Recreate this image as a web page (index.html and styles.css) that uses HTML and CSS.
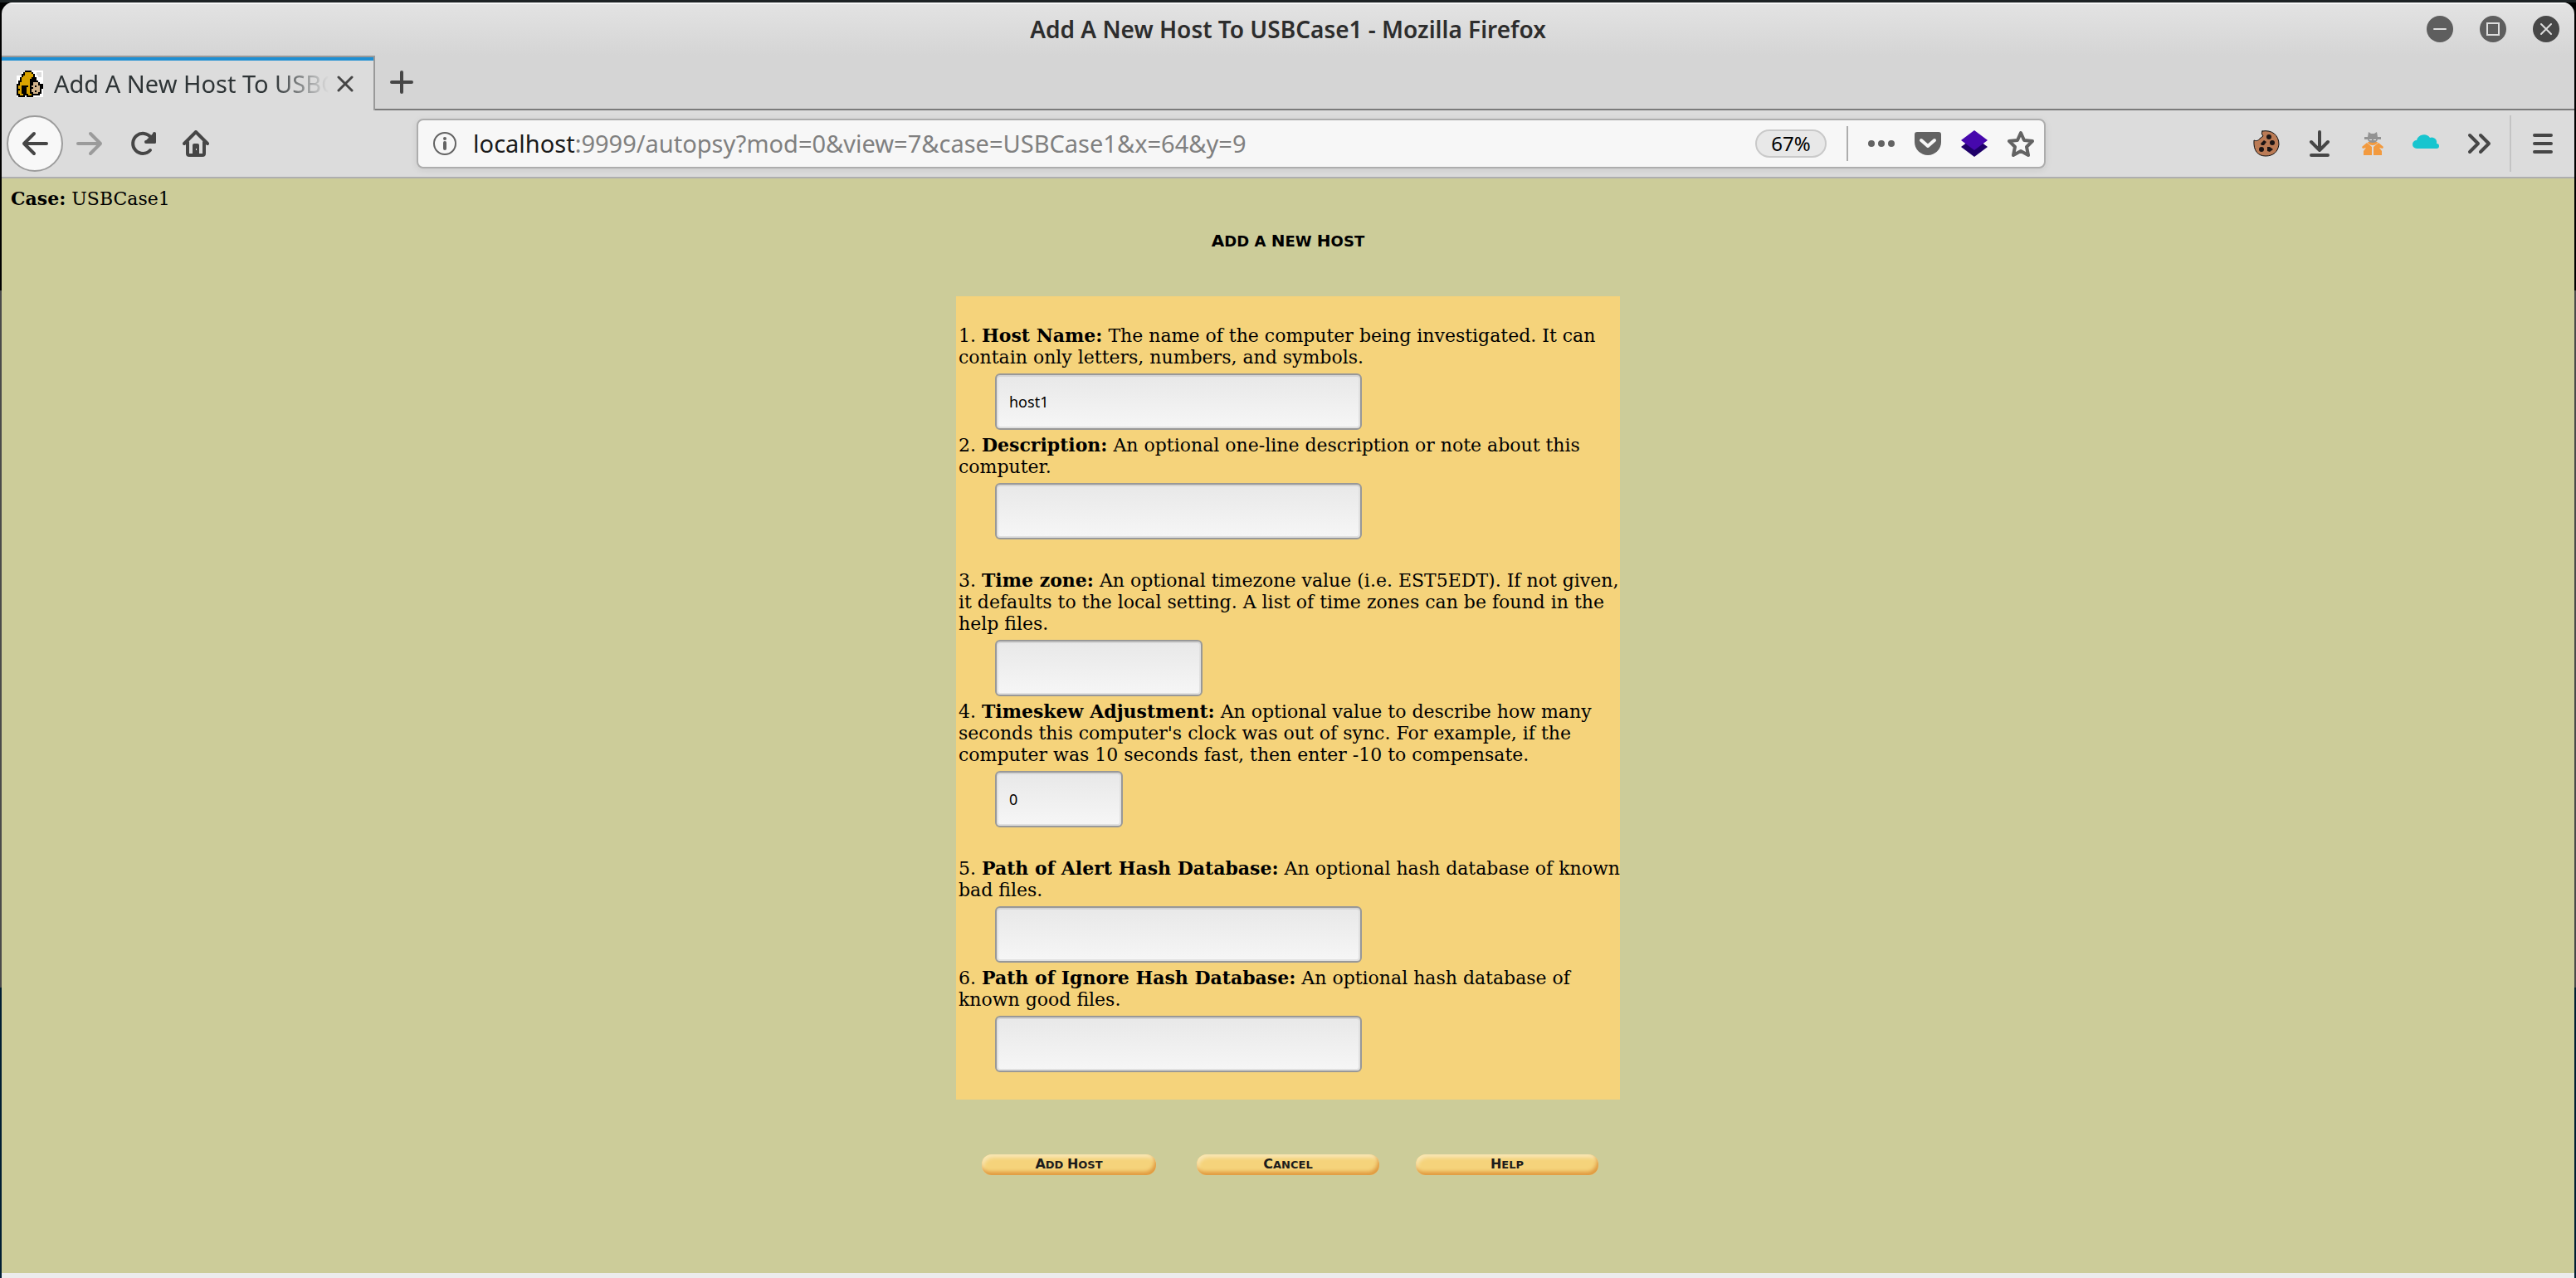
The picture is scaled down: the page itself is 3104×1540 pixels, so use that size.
FILE: index.html
```html
<!DOCTYPE html>
<html lang="en">
<head>
<meta charset="utf-8">
<title>Add A New Host To USBCase1</title>
<link rel="stylesheet" href="styles.css">
</head>
<body>
<div class="window">
  <header class="chrome">
    <div class="titlebar">
      <h1 class="window-title">Add A New Host To USBCase1 - Mozilla Firefox</h1>
      <div class="controls">
        <button class="control" aria-label="Minimize"><svg viewBox="0 0 32 32"><path d="M9 16H23"/></svg></button>
        <button class="control" aria-label="Maximize"><svg viewBox="0 0 32 32"><path d="M9 9H23V23H9Z"/></svg></button>
        <button class="control control-close" aria-label="Close"><svg viewBox="0 0 32 32"><path d="M10 10L22 22M22 10L10 22"/></svg></button>
      </div>
    </div>
    <div class="tabs">
      <div class="tab">
        <svg class="favicon" viewBox="0 0 16 16" shape-rendering="crispEdges">
          <path fill="#fff" d="M5 0H16V16H0V3H3V1H5Z"/>
          <path fill="#dcdcdc" d="M12 1H15V4H13V3H12Z"/>
          <path fill="#000" d="M5 0H9V1H10V2H11V4H12V6H13V7H14V8H16V11H15V14H14V15H10V16H6V15H5V16H1V15H0V8H1V6H2V4H3V2H4V1H5Z"/>
          <path fill="#d9a300" d="M5 1H9V2H10V4H9V5H8V14H9V15H7V14H6V10H7V6H6V4H5V9H4V15H2V14H1V9H2V7H3V4H4V3H5Z"/>
          <path fill="#000" d="M3 9H4V14H3ZM1 11H2V12H1Z"/>
          <path fill="#d9a300" d="M5 3H8V9H5Z"/>
          <path fill="#d2b48c" d="M10 7H13V9H14V13H13V14H10V13H9V9H10Z"/>
          <path fill="#000" d="M9 10H10V11H9ZM11 9H12V10H11ZM11 12H12V13H11Z"/>
        </svg>
        <span class="tab-label">Add A New Host To USBCase1</span>
        <button class="tab-close" aria-label="Close tab"><svg viewBox="0 0 20 20"><path d="M2 2L18 18M18 2L2 18"/></svg></button>
      </div>
      <div class="tab-rest">
        <button class="icon" aria-label="New tab"><svg viewBox="0 0 32 32"><path d="M16 4V28M4 16H28"/></svg></button>
      </div>
    </div>
    <nav class="toolbar">
      <div class="nav-buttons">
        <button class="back" aria-label="Back"><svg viewBox="0 0 32 32"><path d="M30 16H3M15 4L3 16L15 28"/></svg></button>
        <button class="icon forward" aria-label="Forward"><svg viewBox="0 0 32 32"><path d="M2 16H29M17 4L29 16L17 28"/></svg></button>
        <button class="icon" aria-label="Reload"><svg viewBox="0 0 32 32"><path d="M25 24A12 12 0 1 1 26 9"/><path d="M30 4V14H20"/><path class="solid" d="M21 14L30 5V14Z"/></svg></button>
        <button class="icon" aria-label="Home"><svg viewBox="0 0 32 32"><path d="M2 16L16 2L30 16M6 14V28Q6 30 8 30H24Q26 30 26 28V14"/><path class="solid nostroke" d="M12 29V18Q12 16 14 16H18Q20 16 20 18V29Z"/><path class="dot" d="M16 22H17V24H16Z"/></svg></button>
      </div>
      <div class="spacer"></div>
      <div class="urlbar">
        <svg class="info" viewBox="0 0 32 32"><circle cx="16" cy="16" r="13"/><path d="M16 15V22"/><circle class="pip" cx="16" cy="10" r="2"/></svg>
        <div class="url"><span class="url-host">localhost</span>:9999/autopsy?mod=0&amp;view=7&amp;case=USBCase1&amp;x=64&amp;y=9</div>
        <button class="zoom-level">67%</button>
        <div class="url-divider"></div>
        <div class="url-actions">
          <button class="icon muted" aria-label="Page actions"><svg viewBox="0 0 32 32"><g class="solid nostroke"><circle cx="4" cy="16" r="4"/><circle cx="16" cy="16" r="4"/><circle cx="28" cy="16" r="4"/></g></svg></button>
          <button class="icon muted" aria-label="Save to Pocket"><svg viewBox="0 0 32 32"><path class="solid nostroke" d="M3 2H29Q32 2 32 5V14A16 16 0 0 1 0 14V5Q0 2 3 2Z"/><path class="tick" d="M8 12L16 19L24 12"/></svg></button>
          <button class="icon" aria-label="Wappalyzer"><svg viewBox="0 0 32 32"><path class="nostroke" fill="#1f0069" d="M0 20L16 8L32 20L16 32Z"/><path class="nostroke" fill="#4608ad" d="M0 12L16 0L32 12L16 24Z"/></svg></button>
          <button class="icon muted" aria-label="Bookmark this page"><svg viewBox="0 0 32 32"><path d="M16 3L20 12L30 13L23 20L25 30L16 25L7 30L9 20L2 13L12 12Z"/></svg></button>
        </div>
      </div>
      <div class="spacer"></div>
      <div class="extensions">
        <button class="icon" aria-label="Cookies"><svg viewBox="0 0 32 32"><path fill="#bb7b55" stroke="#111" class="thin" d="M11 1C23-1 31 6 31 17C30 26 24 31 15 31C6 31 0 25 1 12C3 13 6 13 8 10L12 7Q9 4 11 1Z"/><g class="nostroke" fill="#1c1514"><circle cx="19" cy="8" r="3"/><path d="M9 16L13 12L16 14L13 18L10 18Z"/><circle cx="23" cy="15" r="3"/><circle cx="10" cy="23" r="3"/><path d="M17 20L20 20L24 23L20 26L17 25Z"/></g></svg></button>
        <button class="icon" aria-label="Downloads"><svg viewBox="0 0 32 32"><path d="M16 2V24M6 14L16 24L26 14M6 30H26"/></svg></button>
        <button class="icon" aria-label="User agent"><svg viewBox="0 0 32 32"><g class="nostroke"><path fill="#f29a3f" d="M10 14H22Q21 18 16 18Q11 18 10 14Z"/><path fill="#939393" d="M11 2L14 4H18L21 2L22 8H26V11H22Q21 15 16 15Q11 15 10 11H6V8H10Z"/><path fill="#e8e8e8" d="M12 11H15V12H12ZM17 11H20V12H17Z"/><path fill="#f29a3f" d="M3 20L9 15L15 20V30H5V25L8 21L4 22ZM29 20L23 15L17 20V30H27V25L24 21L28 22Z"/></g></svg></button>
        <button class="icon" aria-label="Cloud"><svg viewBox="0 0 32 32"><path class="nostroke" fill="#17c5cf" d="M5 22A5 5 0 0 1 5 12A9 9 0 0 1 21 9A6 6 0 0 1 29 16A3 3 0 0 1 29 22Z"/></svg></button>
        <button class="icon" aria-label="More tools"><svg viewBox="0 0 32 32"><path d="M5 6L15 16L5 26M18 6L28 16L18 26"/></svg></button>
      </div>
      <div class="menu">
        <button class="icon" aria-label="Menu"><svg viewBox="0 0 32 32"><path d="M6 6H26M6 16H26M6 26H26"/></svg></button>
      </div>
    </nav>
  </header>
  <main class="page">
    <p class="case"><b>Case:</b> USBCase1</p>
    <h2 class="heading caps"><span class="cap">A</span>dd a <span class="cap">N</span>ew <span class="cap">H</span>ost</h2>
    <form class="form">
      <div class="panel">
        <div class="pair">
          <div class="field"><label for="host">1. <b>Host Name:</b> The name of the computer being investigated. It can contain only letters, numbers, and symbols.</label><input id="host" class="wide" type="text" value="host1"></div>
          <div class="field"><label for="desc">2. <b>Description:</b> An optional one-line description or note about this computer.</label><input id="desc" class="wide" type="text"></div>
        </div>
        <div class="pair">
          <div class="field"><label for="tz">3. <b>Time zone:</b> An optional timezone value (i.e. EST5EDT). If not given, it defaults to the local setting. A list of time zones can be found in the help files.</label><input id="tz" class="medium" type="text"></div>
          <div class="field"><label for="skew">4. <b>Timeskew Adjustment:</b> An optional value to describe how many seconds this computer's clock was out of sync. For example, if the computer was 10 seconds fast, then enter -10 to compensate.</label><input id="skew" class="narrow" type="text" value="0"></div>
        </div>
        <div class="pair">
          <div class="field"><label for="alert">5. <b>Path of Alert Hash Database:</b> An optional hash database of known bad files.</label><input id="alert" class="wide" type="text"></div>
          <div class="field"><label for="ignore">6. <b>Path of Ignore Hash Database:</b> An optional hash database of known good files.</label><input id="ignore" class="wide" type="text"></div>
        </div>
      </div>
      <div class="actions">
        <button class="pill pill-add caps" type="submit"><span class="cap">A</span>dd <span class="cap">H</span>ost</button>
        <button class="pill caps" type="button"><span class="cap">C</span>ancel</button>
        <button class="pill caps" type="button"><span class="cap">H</span>elp</button>
      </div>
    </form>
  </main>
</div>
</body>
</html>
```

FILE: styles.css
```css
* { box-sizing: border-box; }

body {
  margin: 0;
  min-height: 100vh;
  display: flex;
  flex-direction: column;
  padding: 3px 2px 0;
  background: linear-gradient(#1d2325 0 3px, #000 3px 350px, #4a4a4a 350px 1190px, #001e33 1190px);
  font-family: "Noto Sans", "Open Sans", sans-serif;
  color: #2e3436;
}

button {
  margin: 0;
  padding: 0;
  border: 0;
  background: none;
  font: inherit;
  color: inherit;
}

svg {
  display: block;
  width: 100%;
  height: 100%;
  fill: none;
  stroke: currentColor;
  stroke-width: 4;
  stroke-linecap: round;
  stroke-linejoin: round;
}

.nostroke { stroke: none; }
.solid { fill: currentColor; }

.window {
  flex: 1;
  display: flex;
  flex-direction: column;
  border-bottom: 6px solid #ececec;
  border-radius: 14px 14px 0 0;
  overflow: hidden;
}

.chrome { background: linear-gradient(#e3e3e3, #d5d5d5 64px); box-shadow: inset 0 2px #f8f8f8; }

.titlebar {
  height: 64px;
  display: grid;
  grid-template-columns: 1fr auto 1fr;
  align-items: center;
  padding: 0 18px;
}

.window-title {
  grid-column: 2;
  margin: 0;
  font-size: 28px;
  line-height: 40px;
  font-weight: 600;
  color: #2d2d2d;
}

.controls { display: flex; justify-content: flex-end; gap: 32px; }

.control {
  width: 32px;
  height: 32px;
  border-radius: 50%;
  background: #5e5e5e;
  color: #dedede;
}

.control svg { stroke-width: 2; stroke-linejoin: miter; }
.control-close { background: #474747; }

.tabs { display: flex; height: 66px; }

.tab {
  width: 450px;
  display: flex;
  align-items: center;
  padding: 0 24px 0 18px;
  border-top: 2px solid #999;
  border-right: 2px solid #999;
  box-shadow: inset 0 4px #1f8fd2;
  background: #dcdcdc;
}

.favicon { width: 32px; height: 32px; stroke: none; flex: none; }

.tab-label {
  flex: 1;
  margin: 0 10px 0 13px;
  font-size: 29px;
  line-height: 40px;
  white-space: nowrap;
  overflow: hidden;
  mask-image: linear-gradient(to right, #000 80%, transparent);
}

.tab-close { width: 20px; height: 20px; color: #464646; }
.tab-close svg { stroke-width: 3; }

.tab-rest {
  flex: 1;
  display: flex;
  align-items: center;
  padding-left: 16px;
  border-bottom: 2px solid #7b7b7b;
}

.icon { width: 32px; height: 32px; color: #464646; flex: none; }
.muted { color: #636363; }
.forward { color: #9b9b9b; }

.toolbar {
  height: 82px;
  display: flex;
  align-items: center;
  padding: 0 22px 0 6px;
  border-bottom: 2px solid #aeaeae;
  background: #dcdcdc;
}

.nav-buttons { display: flex; align-items: center; gap: 32px; }

.back {
  width: 68px;
  height: 68px;
  margin-right: -16px;
  padding: 16px;
  border: 2px solid #9c9c9c;
  border-radius: 50%;
  background: #f8f8f8;
  color: #464646;
}

.dot { fill: #ddd; stroke: none; }
.tick { stroke: #f7f7f7; }
.thin { stroke-width: 1; }

.spacer { flex: 250 1 0; }

.urlbar {
  flex: 1930 1 0;
  height: 60px;
  display: flex;
  align-items: center;
  padding: 0 12px 0 16px;
  border: 2px solid #adadad;
  border-radius: 8px;
  background: #f7f7f7;
  box-shadow: 0 2px 8px rgba(0, 0, 0, .08);
}

.info { width: 32px; height: 32px; flex: none; color: #636363; stroke-width: 2; }
.info path { stroke-width: 4; }
.pip { fill: currentColor; stroke: none; }

.url {
  flex: 1;
  margin-left: 18px;
  font-size: 29px;
  line-height: 40px;
  color: #808080;
  white-space: nowrap;
}

.url-host { color: #1a1a1a; }

.zoom-level {
  width: 86px;
  height: 34px;
  border: 2px solid #c9c9c9;
  border-radius: 17px;
  background: #e8e8e8;
  font-size: 24px;
  line-height: 28px;
  color: #000;
}

.url-divider { width: 2px; height: 42px; margin: 0 24px; background: #adadad; }
.url-actions { display: flex; gap: 24px; }
.extensions { display: flex; gap: 32px; }

.menu {
  height: 68px;
  display: flex;
  align-items: center;
  margin-left: 21px;
  padding-left: 22px;
  border-left: 2px solid #c4c4c4;
}

.page {
  flex: 1;
  padding: 12px 11px;
  background: #cccc99;
  font-family: "DejaVu Serif", serif;
  font-size: 22px;
  line-height: 26px;
  color: #000;
}

.page b, .cap { line-height: 16px; }

.case { margin: 0; }

.caps {
  font-family: "DejaVu Sans", sans-serif;
  font-weight: 700;
  text-transform: uppercase;
}

.heading {
  margin: 25px 0 0;
  text-align: center;
  font-size: 18px;
  line-height: 26px;
}

.heading .cap { font-size: 20px; }

.form { display: flex; flex-direction: column; align-items: center; margin-top: 53px; }

.panel {
  width: 800px;
  max-width: 100%;
  display: flex;
  flex-direction: column;
  gap: 37px;
  padding: 35px 0 33px 3px;
  background: #f5d37b;
}

.pair { display: flex; flex-direction: column; gap: 6px; }
.field { display: flex; flex-direction: column; align-items: flex-start; gap: 6px; }

.field input {
  height: 68px;
  margin: 0 0 0 44px;
  padding: 0 15px;
  border: 2px solid #989898;
  border-radius: 6px;
  background: linear-gradient(#e8e8e8, #f6f6f6);
  box-shadow: inset 0 2px #d4d4d4, inset 0 0 0 2px #e0e0e0;
  font-family: "Noto Sans", sans-serif;
  font-size: 18px;
  color: #000;
}

.wide { width: 442px; }
.medium { width: 250px; }
.narrow { width: 154px; }

.actions {
  width: 792px;
  max-width: 100%;
  display: grid;
  grid-template-columns: repeat(3, 1fr);
  justify-items: center;
  margin-top: 66px;
}

.pill {
  width: 220px;
  height: 25px;
  border-radius: 12px;
  background: #f5d37b;
  box-shadow: inset -2px -4px 4px #e09a40, inset 2px 4px 4px #f8e6b4;
  font-size: 13px;
  line-height: 24px;
  color: #1c1c1c;
}

.pill .cap { font-size: 16px; }
.pill-add { width: 210px; }
```
